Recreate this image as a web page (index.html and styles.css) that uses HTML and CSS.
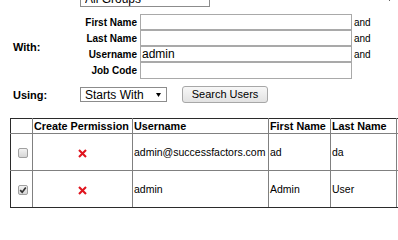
FILE: index.html
```html
<!DOCTYPE html>
<html>
<head>
<meta charset="utf-8">
<title>Search Users</title>
<link rel="stylesheet" href="styles.css">
</head>
<body>
<form class="search">
  <span class="side"></span>
  <span class="select-wrap">
    <select class="sel sel-groups"><option>All Groups</option></select>
    <svg class="arrow" width="5" height="4" viewBox="0 0 5 4"><polygon points="0,0 5,0 2.5,4" fill="#000"/></svg>
  </span>

  <span class="side">With:</span>
  <div class="fields">
    <label class="flabel" for="fn">First Name</label>
    <input id="fn" class="field" type="text">
    <span class="and">and</span>

    <label class="flabel" for="ln">Last Name</label>
    <input id="ln" class="field" type="text">
    <span class="and">and</span>

    <label class="flabel" for="un">Username</label>
    <input id="un" class="field" type="text" value="admin">
    <span class="and">and</span>

    <label class="flabel" for="jc">Job Code</label>
    <input id="jc" class="field" type="text">
    <span class="and"></span>
  </div>

  <span class="side">Using:</span>
  <div class="using">
    <span class="select-wrap">
      <select class="sel sel-using"><option>Starts With</option></select>
      <svg class="arrow" width="5" height="4" viewBox="0 0 5 4"><polygon points="0,0 5,0 2.5,4" fill="#000"/></svg>
    </span>
    <button type="button" class="btn">Search Users</button>
  </div>
</form>

<table class="users">
  <colgroup>
    <col class="c-check">
    <col class="c-perm">
    <col class="c-user">
    <col class="c-first">
    <col class="c-last">
    <col class="c-more">
  </colgroup>
  <thead>
    <tr>
      <th></th>
      <th>Create Permission</th>
      <th>Username</th>
      <th>First Name</th>
      <th>Last Name</th>
      <th></th>
    </tr>
  </thead>
  <tbody>
    <tr>
      <td class="center"><span class="cb"></span></td>
      <td class="center"><svg class="nope" width="9" height="9" viewBox="0 0 9 9"><path d="M1 1 L8 8 M8 1 L1 8" stroke="#e0141e" stroke-width="2.1" fill="none"/></svg></td>
      <td>admin@successfactors.com</td>
      <td>ad</td>
      <td>da</td>
      <td></td>
    </tr>
    <tr>
      <td class="center"><span class="cb cb-on"><svg width="8" height="8" viewBox="0 0 8 8"><polyline points="1.2,4.2 3.2,6.3 6.8,1.6" stroke="#333" stroke-width="1.7" fill="none"/></svg></span></td>
      <td class="center"><svg class="nope" width="9" height="9" viewBox="0 0 9 9"><path d="M1 1 L8 8 M8 1 L1 8" stroke="#e0141e" stroke-width="2.1" fill="none"/></svg></td>
      <td>admin</td>
      <td>Admin</td>
      <td>User</td>
      <td></td>
    </tr>
  </tbody>
</table>
</body>
</html>
```

FILE: styles.css
```css
html, body {
  margin: 0;
  padding: 0;
  overflow: hidden;
  background: #fff;
  color: #000;
  font-family: "Liberation Sans", Arial, sans-serif;
}

.search {
  display: grid;
  grid-template-columns: 67px auto;
  row-gap: 7px;
  align-items: center;
  margin: -9px 0 0 0;
  padding-left: 13px;
}

.side {
  font-size: 11px;
  font-weight: bold;
}

.select-wrap {
  position: relative;
  display: inline-block;
  line-height: 0;
}

.sel {
  -webkit-appearance: none;
  appearance: none;
  box-sizing: border-box;
  margin: 0;
  border: 1px solid #8c8c8c;
  border-radius: 0;
  background: #fff;
  color: #000;
  font-family: "Liberation Sans", Arial, sans-serif;
  font-size: 12px;
  padding: 0 0 0 4px;
}

.sel-groups {
  width: 130px;
  height: 16px;
}

.sel-using {
  width: 87px;
  height: 15px;
}

.arrow {
  position: absolute;
  right: 6px;
  top: 50%;
  margin-top: -2px;
  pointer-events: none;
}

.fields {
  display: grid;
  grid-template-columns: 60px 212px auto;
  grid-template-rows: 16px 16px 16px 17px;
  align-items: center;
}

.flabel {
  font-size: 10px;
  font-weight: bold;
  text-align: right;
  padding-right: 3px;
  white-space: nowrap;
}

.field {
  box-sizing: border-box;
  width: 212px;
  height: 100%;
  margin: 0;
  border: 1px solid #a9a9a9;
  border-radius: 0;
  padding: 0 1px;
  font-family: "Liberation Sans", Arial, sans-serif;
  font-size: 12px;
  color: #000;
  outline: none;
}

.and {
  font-size: 10px;
  padding-left: 2px;
}

.using {
  display: flex;
  align-items: center;
  gap: 15px;
  height: 17px;
}

.btn {
  box-sizing: border-box;
  width: 86px;
  height: 17px;
  margin: 0;
  padding: 0;
  border: 1px solid #a7a7a7;
  border-radius: 3px;
  background: linear-gradient(#f7f7f7, #e2e2e2);
  font-family: "Liberation Sans", Arial, sans-serif;
  font-size: 11px;
  color: #000;
  line-height: 15px;
}

.users {
  border-collapse: collapse;
  table-layout: fixed;
  width: 506px;
  margin: 15px 0 0 10px;
}

.c-check { width: 22px; }
.c-perm { width: 100px; }
.c-user { width: 136px; }
.c-first { width: 62px; }
.c-last { width: 66px; }
.c-more { width: 120px; }

.users th,
.users td {
  border: 1px solid #808080;
  text-align: left;
  white-space: nowrap;
  overflow: hidden;
}

.users th {
  font-size: 10.8px;
  font-weight: bold;
  line-height: 12px;
  padding: 1px;
}

.users td {
  font-size: 10.5px;
  height: 36px;
  padding: 0 1px;
  vertical-align: middle;
}

.users thead th {
  border-top-color: #2b2b2b;
}

.users th:first-child,
.users td:first-child {
  border-left-color: #2b2b2b;
}

.users tbody tr:last-child td {
  border-bottom-color: #2b2b2b;
}

.users td.center {
  text-align: center;
}

.cb {
  display: inline-block;
  box-sizing: border-box;
  width: 10px;
  height: 10px;
  border: 1px solid #a0a0a0;
  border-radius: 2px;
  background: linear-gradient(#f2f2f2, #d6d6d6);
  vertical-align: middle;
  line-height: 0;
  position: relative;
  left: 1px;
}

.cb svg {
  display: block;
}

.nope {
  display: inline-block;
  vertical-align: middle;
}
```
